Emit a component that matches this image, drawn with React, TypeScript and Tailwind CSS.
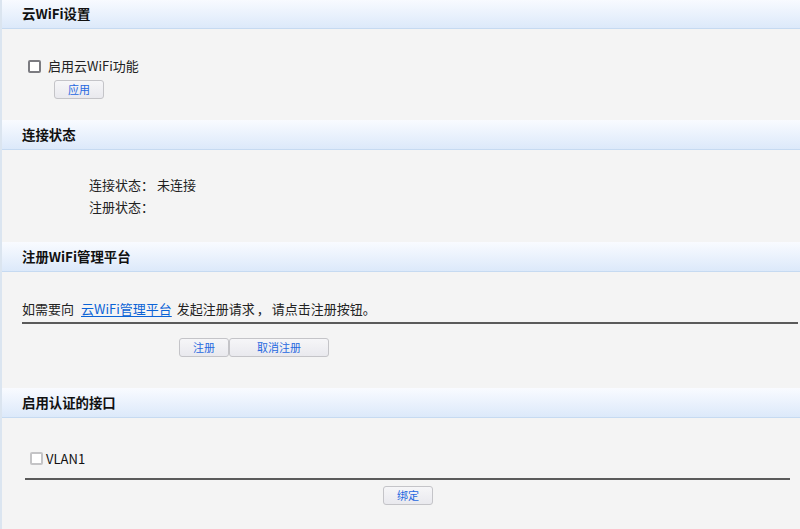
import React from "react";

const font = { fontFamily: '"Noto Sans CJK SC", "Noto Sans", sans-serif' };

function Header({ title }: { title: string }) {
  return (
    <div className="h-[30px] border-b border-[#c6daf1] bg-gradient-to-b from-[#f9fbff] to-[#dce9fa] flex items-center pl-[20px]">
      <span className="text-[13.4px] font-bold text-[#111] leading-none">{title}</span>
    </div>
  );
}

function Btn({ children, w }: { children: React.ReactNode; w: string }) {
  return (
    <button
      className={`${w} h-[19px] rounded-[3px] border border-[#c4c4c8] bg-gradient-to-b from-[#f6f6f8] to-[#e9e9ee] text-[11px] text-[#2668e0] leading-none flex items-center justify-center`}
    >
      {children}
    </button>
  );
}

export default function App() {
  return (
    <div className="w-[800px] h-[529px] bg-[#f4f4f4] border-l-2 border-[#dbe5f0] overflow-hidden text-[13px] text-[#222]" style={font}>
      <div className="-mt-[1px]">
        <Header title="云WiFi设置" />
      </div>
      <div className="h-[91px] pt-[29px] pl-[26px]">
        <div className="flex items-center h-[16px]">
          <span className="w-[13px] h-[13px] border-2 border-[#7b7b80] rounded-[2px] bg-white" />
          <span className="ml-[7px] leading-[16px]">启用云WiFi功能</span>
        </div>
        <div className="mt-[6px] ml-[26px]">
          <Btn w="w-[50px]">应用</Btn>
        </div>
      </div>

      <Header title="连接状态" />
      <div className="h-[92px] pt-[24px] pl-[87px] leading-[22px]">
        <div>连接状态： 未连接</div>
        <div>注册状态：</div>
      </div>

      <Header title="注册WiFi管理平台" />
      <div className="h-[116px] pt-[26px]">
        <div className="pl-[20px] leading-[22px] h-[20px] flex">
          <span>如需要向</span>
          <span className="ml-[7px] mr-[5px] text-[#0b63d6] underline underline-offset-2">云WiFi管理平台</span>
          <span>发起注册请求</span>
          <span className="inline-block w-[17px] text-center">，</span>
          <span>请点击注册按钮。</span>
        </div>
        <div className="mt-[4px] ml-[20px] mr-[2px] h-[2px] bg-[#5a5a5a]" />
        <div className="mt-[14px] ml-[177px] flex">
          <Btn w="w-[50px]">注册</Btn>
          <Btn w="w-[100px]">取消注册</Btn>
        </div>
      </div>

      <Header title="启用认证的接口" />
      <div className="pt-[33px]">
        <div className="flex items-center h-[14px] pl-[28px]">
          <span className="w-[13px] h-[13px] border-2 border-[#c4c4c6] rounded-[2px] bg-white" />
          <span className="ml-[3px] leading-none text-[#111]">VLAN1</span>
        </div>
        <div className="mt-[13px] ml-[23px] mr-[10px] h-[2px] bg-[#5a5a5a]" />
        <div className="mt-[6px] ml-[381px]">
          <Btn w="w-[50px]">绑定</Btn>
        </div>
      </div>
    </div>
  );
}
